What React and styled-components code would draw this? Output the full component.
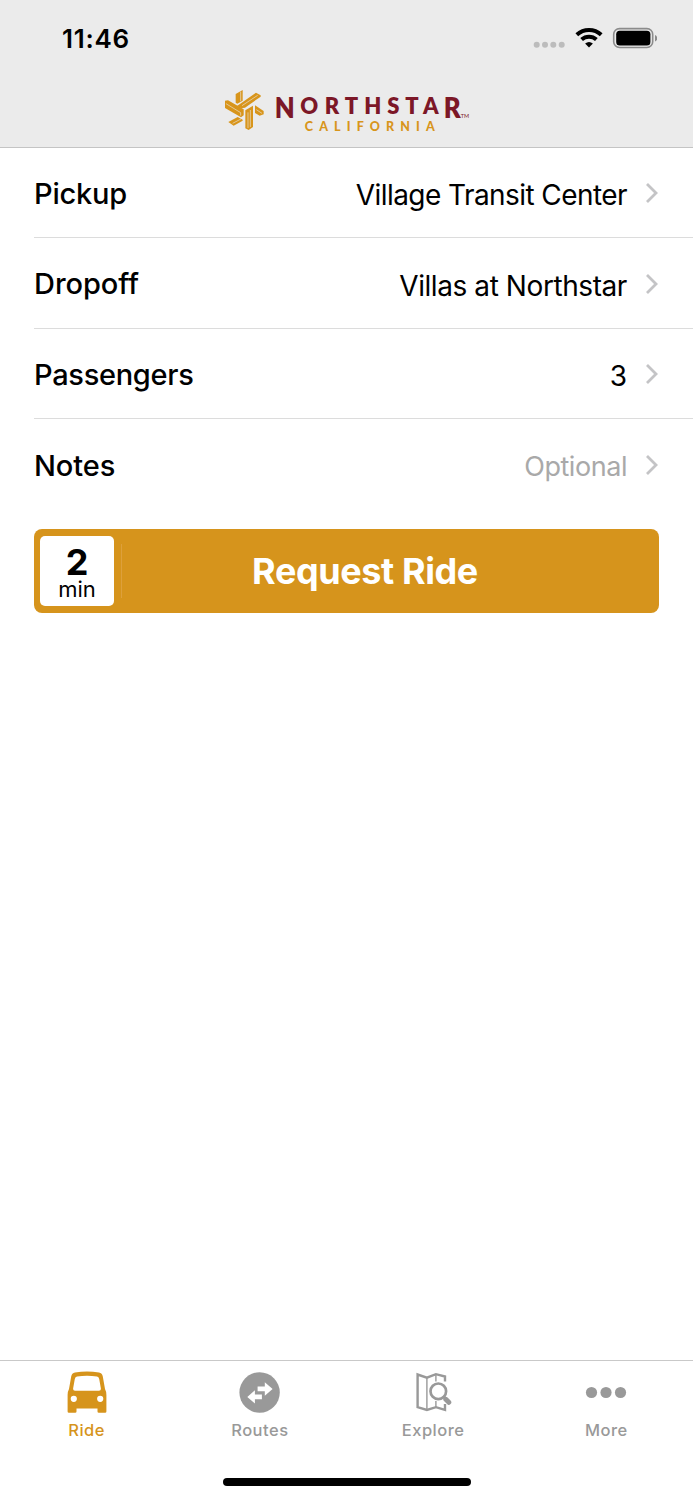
import React from 'react'
import styled, { createGlobalStyle } from 'styled-components'

const rows = [
  { label: 'Pickup', value: 'Village Transit Center', labelSpace: -0.2, space: -0.57 },
  { label: 'Dropoff', value: 'Villas at Northstar', labelSpace: -0.05, space: -0.42 },
  { label: 'Passengers', value: '3', labelSpace: -0.3, space: 0 },
  { label: 'Notes', value: 'Optional', labelSpace: -0.1, space: -0.45, optional: true },
]

const tabs = [
  { name: 'Ride', icon: CarIcon, active: true },
  { name: 'Routes', icon: RoutesIcon },
  { name: 'Explore', icon: MapIcon },
  { name: 'More', icon: MoreIcon },
]

const App = () => {
  return (
    <>
      <GlobalStyle />
      <Screen>
        <Header>
          <StatusBar>
            <Clock>11:46</Clock>
            <StatusIcons />
          </StatusBar>
          <Logo />
        </Header>

        <Main>
          {rows.map((row) => (
            <Row key={row.label}>
              <Label $space={row.labelSpace}>{row.label}</Label>
              <Value $space={row.space} $optional={row.optional}>
                {row.value}
              </Value>
              <Chevron width='13' height='22' viewBox='0 0 13 22'>
                <path d='M2 2l9 9-9 9' />
              </Chevron>
            </Row>
          ))}
          <RequestButton type='button'>
            <Wait>
              <b>2</b>
              <span>min</span>
            </Wait>
            <Divider />
            <ButtonText>Request Ride</ButtonText>
          </RequestButton>
        </Main>

        <TabBar>
          {tabs.map(({ name, icon: Icon, active }) => (
            <Tab key={name} $active={active}>
              <Icon />
              <TabName>{name}</TabName>
            </Tab>
          ))}
        </TabBar>
        <HomeArea>
          <HomeIndicator />
        </HomeArea>
      </Screen>
    </>
  )
}

function StatusIcons() {
  return (
    <svg width='124' height='24' viewBox='0 0 124 24'>
      <g fill='#bcbcbc'>
        <circle cx='3.7' cy='18.8' r='3' />
        <circle cx='12' cy='18.8' r='3' />
        <circle cx='20.3' cy='18.8' r='3' />
        <circle cx='28.7' cy='18.8' r='3' />
      </g>
      <g fill='none' stroke='#000' strokeWidth='4'>
        <path d='M43.8 8.8a18 18 0 0 1 24.4 0' />
        <path d='M48.6 13.6a11 11 0 0 1 14.8 0' />
      </g>
      <path d='M52.1 17.6a6 6 0 0 1 7.8 0L56 21.600z' />
      <rect
        x='80.7'
        y='2.6'
        width='39'
        height='18.9'
        rx='5.8'
        fill='none'
        stroke='#8b8b8b'
        strokeWidth='1.6'
      />
      <rect x='83.2' y='4.800' width='34.2' height='14.6' rx='3.5' />
      <path d='M122 9q2.200 1 2.200 3.300t-2.200 3.300z' fill='#8b8b8b' />
    </svg>
  )
}

function Logo() {
  return (
    <LogoSvg width='248' height='46' viewBox='224 88 248 46'>
      <g transform='translate(215 80) scale(.3333)'>
        <g fill='#d8951b'>
          <path d='M62 42l21-12v32l-16 9-5-3z' />
          <path d='M66 78l57-40 14 8v4L90 83l-12 2z' />
          <path d='M30 62l9-1 47 27v18l-8 6-48-28z' />
          <path d='M91 91l23-14v64l-13 9-10-5z' />
          <path d='M40 126l28-15 15 8v3l-27 15z' />
          <path d='M120 76l26 17v10l-12 4-14-8z' />
        </g>
        <g fill='none' stroke='#ebebeb' strokeWidth='1.8'>
          <path d='M77 35v29M81 77l47-31M33 71l44 27v9M99 97v47M106 90v51M53 130l25-13M124 89l17 11' />
        </g>
      </g>
      <g fill='#7c1727' fontFamily='Lato' fontWeight='800' fontSize='22'>
        <text x='274.8' y='118' fontSize='28' textLength='20' lengthAdjust='spacingAndGlyphs'>N</text>
        <text x='300.3' y='113.8'>O</text>
        <text x='324.7' y='113.8'>R</text>
        <text x='344.8' y='113.8'>T</text>
        <text x='364.2' y='113.8'>H</text>
        <text x='387.2' y='113.8'>S</text>
        <text x='405.2' y='113.8'>T</text>
        <text x='423' y='113.8'>A</text>
        <text x='443.8' y='118' fontSize='28' textLength='17' lengthAdjust='spacingAndGlyphs'>R</text>
      </g>
      <text x='460.8' y='117.6' fontFamily='Lato' fontSize='5.5' fill='#7c1727'>TM</text>
      <text
        x='304.8'
        y='131.2'
        textLength='130'
        fill='#d8951b'
        fontFamily='Lato'
        fontWeight='900'
        fontSize='12.5'
      >
        CALIFORNIA
      </text>
    </LogoSvg>
  )
}

function CarIcon() {
  return (
    <svg width='40' height='42' viewBox='0 0 40 42'>
      <path
        fill='currentColor'
        fillRule='evenodd'
        d='M8 1.5Q20-.6 32 1.500q3.200.6 3.800 4L38 18q1.400 2.500 1.400 6v16.500q0 1.300-1.300 1.300h-6.300q-1.300 0-1.300-1.300v-3h-21v3q0 1.300-1.300 1.300H1.900Q.6 41.800.6 40.500V24q0-3.500 1.400-6L4.200 5.500q.6-3.400 3.800-4zM10 5.400Q8.200 5.800 7.800 8L6.200 17q-.5 2.700 1.800 2.700h24q2.300 0 1.800-2.700L32.200 8Q31.800 5.800 30 5.400q-10-1.400-20 0zM6.800 24.700a3.100 3.100 0 1 0 0 6.200 3.100 3.100 0 0 0 0-6.200zM33.200 24.700a3.100 3.100 0 1 0 0 6.200 3.100 3.100 0 0 0 0-6.200z'
      />
    </svg>
  )
}

function RoutesIcon() {
  return (
    <svg width='42' height='42' viewBox='0 0 42 42'>
      <circle cx='20.6' cy='21.5' r='20.2' fill='currentColor' />
      <path
        fill='#fff'
        d='M18.6 15.6h7.200v-4.300l7.800 6.800-7.800 6.700v-4.500h-7.200zM22.900 23.600h-7v-4.400L8.300 26l7.600 6.600v-4.400h7z'
      />
    </svg>
  )
}

function MapIcon() {
  return (
    <svg width='38' height='42' viewBox='0 0 38 42' fill='none' stroke='currentColor' strokeWidth='2.4'>
      <path d='M31 10.5V5.500L21.900 3.200l-9 3.500L3.600 3.500v32.700l9.300 2.700 9-2.700 9.100 2.700v-6' />
      <path d='M12.9 6.700v31.500M21.900 3.200v7.300M21.900 30v6' strokeWidth='1.400' />
      <circle cx='24.3' cy='20.300' r='7.800' strokeWidth='2.700' />
      <path d='M30 26l2 2' strokeWidth='3' />
      <path d='M31.800 28.300l3 3' strokeWidth='5' strokeLinecap='round' />
    </svg>
  )
}

function MoreIcon() {
  return (
    <svg width='42' height='42' viewBox='0 0 42 42' fill='currentColor'>
      <circle cx='6.500' cy='21.500' r='5.600' />
      <circle cx='21' cy='21.500' r='5.600' />
      <circle cx='35.500' cy='21.500' r='5.600' />
    </svg>
  )
}

const GlobalStyle = createGlobalStyle`
  * {
    box-sizing: border-box;
  }
  body {
    margin: 0;
    background: #fff;
    color: #000;
    font-family: Inter, sans-serif;
  }
`

const Screen = styled.div`
  display: flex;
  flex-direction: column;
  width: 693px;
  height: 1500px;
  overflow: hidden;
`

const Header = styled.header`
  height: 148px;
  background: #ebebeb;
  border-bottom: 1px solid #c4c4c4;
  flex-shrink: 0;
`

const StatusBar = styled.div`
  display: flex;
  justify-content: space-between;
  align-items: center;
  height: 76px;
  padding: 0 36px 0 62px;
  margin-bottom: 12px;
`

const Clock = styled.span`
  font-size: 26px;
  font-weight: 600;
  letter-spacing: 0.7px;
`

const LogoSvg = styled.svg`
  display: block;
  margin-left: 224px;
`

const Main = styled.main`
  flex: 1;
  padding-left: 34px;
`

const Row = styled.div`
  display: flex;
  align-items: center;
  height: 90.4px;
  padding-right: 35px;
  border-bottom: 1px solid #dcdcdc;

  &:nth-child(4) {
    border-bottom: none;
  }
`

const Label = styled.span`
  flex: 1;
  margin-top: 1.5px;
  font-size: 29px;
  font-weight: 500;
  letter-spacing: ${(p) => p.$space}px;
`

const Value = styled.span`
  margin-top: 5px;
  font-size: ${(p) => (p.$optional ? 27 : 28)}px;
  letter-spacing: ${(p) => p.$space}px;
  color: ${(p) => (p.$optional ? '#a9a9a9' : '#000')};
`

const Chevron = styled.svg`
  margin-top: 1px;
  margin-left: 18px;
  fill: none;
  stroke: #c4c4c6;
  stroke-width: 2.8;
`

const RequestButton = styled.button`
  display: flex;
  align-items: center;
  width: 625px;
  height: 84px;
  margin-top: 19px;
  padding: 0 6px;
  border: none;
  border-radius: 8px;
  background: #d6941c;
  color: #fff;
  font-family: inherit;
`

const Wait = styled.div`
  display: flex;
  flex-direction: column;
  align-items: center;
  width: 74px;
  height: 70px;
  padding-top: 8px;
  border-radius: 5px;
  background: #fff;
  color: #000;

  b {
    font-size: 36px;
    line-height: 36px;
  }
  span {
    font-size: 22px;
    line-height: 18px;
  }
`

const Divider = styled.div`
  width: 1px;
  height: 54px;
  margin-left: 7px;
  background: #dda03b;
`

const ButtonText = styled.span`
  flex: 1;
  padding: 1px 45px 0 0;
  text-align: center;
  font-size: 36px;
  font-weight: 700;
  letter-spacing: -0.4px;
`

const TabBar = styled.nav`
  display: grid;
  grid-template-columns: repeat(4, 1fr);
  height: 100px;
  border-top: 1px solid #c9c9c9;
`

const Tab = styled.div`
  display: flex;
  flex-direction: column;
  align-items: center;
  padding-top: 10px;
  color: ${(p) => (p.$active ? '#d6941c' : '#999')};
`

const TabName = styled.span`
  margin-top: 7px;
  font-size: 16.5px;
  line-height: 21px;
  font-weight: 500;
  letter-spacing: 0.5px;
`

const HomeArea = styled.footer`
  display: flex;
  justify-content: center;
  height: 40px;
  padding-top: 18px;
`

const HomeIndicator = styled.div`
  width: 248px;
  height: 8px;
  border-radius: 4px;
  background: #000;
`

export default App
